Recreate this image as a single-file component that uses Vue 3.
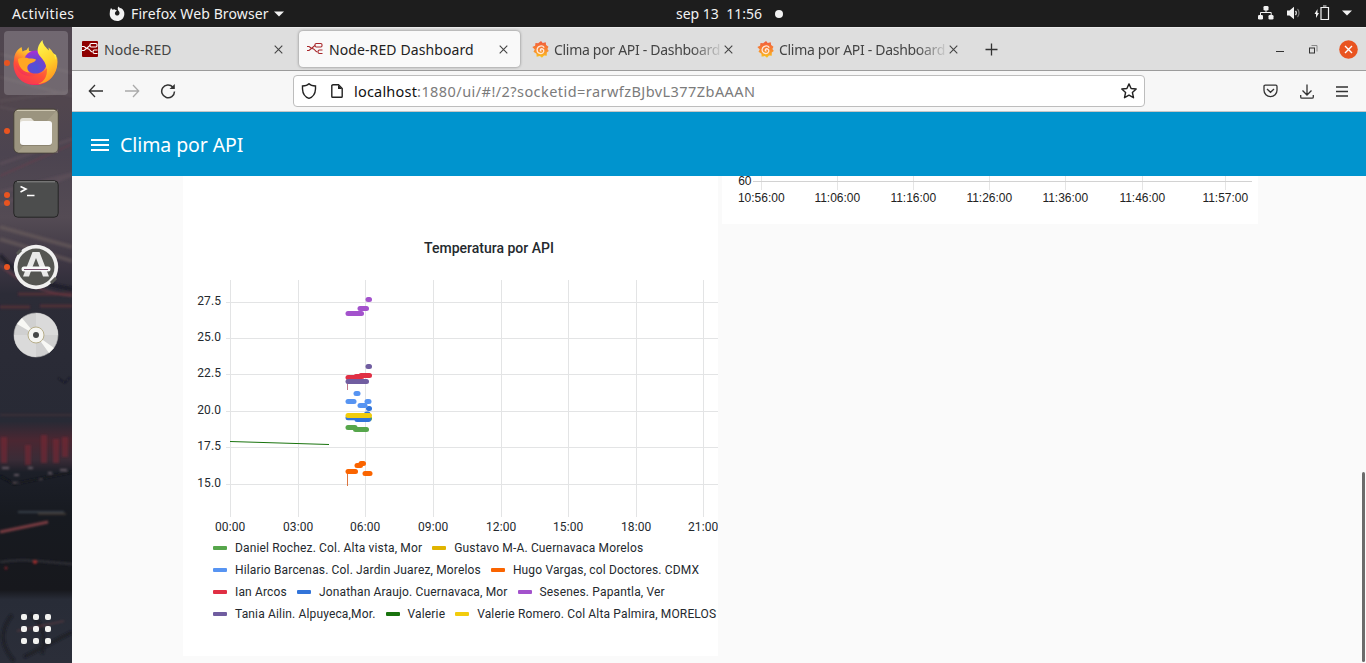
<script setup>
const tabs = [
  { title: 'Node-RED', icon: 'node' },
  { title: 'Node-RED Dashboard', icon: 'dash', active: true },
  { title: 'Clima por API - Dashboard', icon: 'grafana' },
  { title: 'Clima por API - Dashboard', icon: 'grafana' }
]

const legend = [
  [
    { name: 'Daniel Rochez. Col. Alta vista, Mor', color: '#56a64b' },
    { name: 'Gustavo M-A. Cuernavaca Morelos', color: '#e0b400' }
  ],
  [
    { name: 'Hilario Barcenas. Col. Jardin Juarez, Morelos', color: '#5794f2' },
    { name: 'Hugo Vargas, col Doctores. CDMX', color: '#fa6400' }
  ],
  [
    { name: 'Ian Arcos', color: '#e02f44' },
    { name: 'Jonathan Araujo. Cuernavaca, Mor', color: '#3274d9' },
    { name: 'Sesenes. Papantla, Ver', color: '#a352cc' }
  ],
  [
    { name: 'Tania Ailin. Alpuyeca,Mor.', color: '#705da0' },
    { name: 'Valerie', color: '#19730e' },
    { name: 'Valerie Romero. Col Alta Palmira, MORELOS', color: '#f2cc0c' }
  ]
]

const hours = [
  [47.5, '00:00'], [115.5, '03:00'], [182.5, '06:00'], [250.5, '09:00'],
  [318.5, '12:00'], [385.5, '15:00'], [453.5, '18:00'], [520.5, '21:00']
]
const degrees = [
  [26.5, '27.5'], [62.5, '25.0'], [98.5, '22.5'], [135.5, '20.0'], [171.5, '17.5'], [208.5, '15.0']
]

// x1, x2, y, colour of every run of samples
const runs = [
  [165, 172, 151.5, '#56a64b'], [172.500, 183.5, 153.5, '#56a64b'], [184, 186.5, 142.4, '#56a64b'],
  [165, 173, 141.8, '#3274d9'], [174, 185.5, 143.5, '#3274d9'], [183.5, 185, 138, '#3274d9'],
  [185.5, 186.5, 132.5, '#3274d9'],
  [165, 171, 125.5, '#5794f2'], [173, 175, 117.5, '#5794f2'],
  [177, 182, 129.5, '#5794f2'], [184, 186, 125.5, '#5794f2'],
  [165, 172.5, 195.5, '#fa6400'], [174, 177.5, 189.5, '#fa6400'],
  [178, 180.5, 187.5, '#fa6400'], [182, 187, 197.5, '#fa6400'],
  [165, 174, 101.5, '#e02f44'], [173, 179, 100.5, '#e02f44'], [178, 186.500, 99.5, '#e02f44'],
  [165, 183.5, 105.5, '#705da0'], [185, 186.5, 90.5, '#705da0'],
  [165, 178.5, 37.5, '#a352cc'], [177, 183.5, 32.5, '#a352cc'], [185, 186.5, 23.5, '#a352cc'],
  [165, 186.5, 139.5, '#f2cc0c']
]

const times = [
  [39, '10:56:00'], [115, '11:06:00'], [191, '11:16:00'], [267, '11:26:00'],
  [343, '11:36:00'], [420, '11:46:00'], [503, '11:57:00']
]
</script>

<template>
  <div class="desktop">
    <header class="topbar">
      <span class="activities">Activities</span>
      <svg class="fx-mono" width="16" height="16" viewBox="0 0 16 16">
        <path fill="#f2f2f2" d="M1 4.500 2 2l1.600 1.700C4.800 3 6 3 6.600 4L8 4.600 6.300 6c-1 1.500 0 3.500 1.700 3.500 2.200 0 3.300-2.300 1.900-4.300L9 4.300 8.700 2l.9-1.500L11 2.300l.8-.3C14.600 3.600 15.700 6 15.300 8.700 14.800 12.500 12 15 8.200 15 4 15 .7 12 .7 8z" />
      </svg>
      <span class="app-name">Firefox Web Browser</span>
      <svg class="caret" width="10" height="6" viewBox="0 0 10 6"><path fill="#f2f2f2" d="M0 .5h10l-5 5z" /></svg>
      <span class="clock">sep 13&nbsp; 11:56</span>
      <i class="notice"></i>
      <div class="status">
        <svg width="16" height="14" viewBox="0 0 16 14">
          <g fill="#f2f2f2"><rect x="5.500" y="0" width="5" height="4.500" rx="1.300" /><rect x="0" y="9" width="5" height="4.500" rx="1.300" /><rect x="10.500" y="9" width="5" height="4.500" rx="1.300" /></g>
          <path d="M8 4v3M2.500 9V6.500h10.700V9" fill="none" stroke="#f2f2f2" />
        </svg>
        <svg width="16" height="14" viewBox="0 0 16 14">
          <path fill="#f2f2f2" d="M1 4.500h2.500L8 .8v12.400L3.500 9.500H1z" />
          <path d="M9.500 5c1 1 1 3 0 4" fill="none" stroke="#f2f2f2" stroke-width="1.300" />
          <path d="M11.500 3c2 2 2 6 0 8" fill="none" stroke="#777" stroke-width="1.200" />
        </svg>
        <svg width="16" height="16" viewBox="0 0 16 16">
          <path fill="#f2f2f2" d="m3.500 4-3 5H2v4l3-5H3.500z" />
          <path d="M7 2.500h7.500v12H7zM9 1h3.500" fill="none" stroke="#f2f2f2" stroke-width="1.200" />
        </svg>
        <svg width="10" height="6" viewBox="0 0 10 6"><path fill="#f2f2f2" d="M0 .5h10l-5 5z" /></svg>
      </div>
    </header>

    <div class="workspace">
      <nav class="dock">
        <svg class="wallpaper" width="72" height="636" viewBox="0 0 72 636">
          <defs>
            <linearGradient id="sky" x1="0" y1="0" x2="0" y2="1">
              <stop offset="0" stop-color="#504650" /><stop offset=".12" stop-color="#51464e" />
              <stop offset=".2" stop-color="#4c4450" /><stop offset=".3" stop-color="#544b54" />
              <stop offset=".38" stop-color="#3a3441" /><stop offset=".42" stop-color="#2c2c37" />
              <stop offset=".62" stop-color="#282a35" /><stop offset=".65" stop-color="#4b2732" />
              <stop offset=".68" stop-color="#3a2c37" /><stop offset=".7" stop-color="#1c1f28" />
              <stop offset=".77" stop-color="#171a20" /><stop offset=".885" stop-color="#17181d" />
              <stop offset=".9" stop-color="#282c37" /><stop offset="1" stop-color="#2b2e39" />
            </linearGradient>
            <filter id="soft" x="0" y="0" width="72" height="636" filterUnits="userSpaceOnUse"><feGaussianBlur stdDeviation="1" /></filter>
          </defs>
          <rect width="72" height="636" fill="url(#sky)" />
          <g fill="none" filter="url(#soft)">
            <path d="M0 27 72 46M0 50l72 19M0 74l72-10M0 80l40 8" stroke="#6a5d62" stroke-width="2" opacity=".4" />
            <path d="M0 137 72 112M0 165l72-18M0 178l72-30" stroke="#6d5963" stroke-width="3" opacity=".35" />
            <path d="M0 149 72 117" stroke="#7b3c4a" opacity=".7" />
            <path d="M0 200l72 20M0 212l72 22" stroke="#71615f" stroke-width="4" opacity=".5" />
            <path d="M0 228c20 25 50 30 72 34" stroke="#1b1c27" stroke-width="4" opacity=".8" />
            <path d="M0 238c20 18 44 28 72 31" stroke="#6d3d48" stroke-width="2" opacity=".8" />
            <path d="M18 267h54M0 280h30M40 279h32" stroke="#6b3038" stroke-width="3" opacity=".6" />
            <path d="M0 388h72" stroke="#653741" opacity=".6" />
            <path d="M58 351l7 5 5-6" stroke="#14151d" />
            <path d="M4 436v-26M28 438v-20M44 436v-28M56 436v-24M65 430v-20" stroke="#7b2534" stroke-width="6" opacity=".6" />
            <path d="M2 441h7M14 448h5M28 441h5M38 452h4M48 446h4M60 443h7M12 456h8" stroke="#9c8690" stroke-width="2" opacity=".55" />
            <path d="M0 449l14 8 58-12" stroke="#14151c" stroke-width="1.500" />
            <path d="M0 505 48 495" stroke="#9b474c" stroke-width="3" opacity=".75" />
            <path d="M18 485h46" stroke="#59656e" /><path d="M38 487h28" stroke="#8d7254" opacity=".6" />
            <path d="M0 535c24-4 48 0 72 2" stroke="#303139" stroke-width="2" />
            <path d="M12 588c-12 14-12 30 2 46M30 587c12 8 16 22 12 40M24 630l48-25" stroke="#181b23" stroke-width="3.500" opacity=".75" />
            <path d="M17 604 64 594" stroke="#824449" opacity=".7" />
            <circle cx="35" cy="535" r="2" fill="#a02f2e" /><circle cx="6" cy="541" r="1.500" fill="#7b2428" />
          </g>
        </svg>

        <div class="dock-item current">
          <i class="run"></i>
          <svg width="48" height="48" viewBox="0 0 48 48">
            <defs>
              <linearGradient id="fox" x1=".8" y1=".1" x2=".25" y2=".95">
                <stop offset="0" stop-color="#fff044" /><stop offset=".35" stop-color="#ffb52b" />
                <stop offset=".65" stop-color="#ff5436" /><stop offset="1" stop-color="#e8127a" />
              </linearGradient>
              <linearGradient id="flame" x1=".4" y1="0" x2=".7" y2="1">
                <stop offset="0" stop-color="#fff34d" /><stop offset=".5" stop-color="#ffd028" /><stop offset="1" stop-color="#ff8a20" />
              </linearGradient>
              <radialGradient id="globe" cx=".5" cy=".75" r=".75">
                <stop offset="0" stop-color="#4a55d8" /><stop offset=".5" stop-color="#6b45d0" /><stop offset="1" stop-color="#a72fd6" />
              </radialGradient>
            </defs>
            <path fill="url(#fox)" d="M2.500 17C3.500 13 6 10 9.500 8l1 4.500c1.500-1 2.500-1.300 4-1.600l2-3 .5 4.100L28 13 31 8l13 8c4.200 12-4 30-20 30C11 46 1 37 1.500 24z" />
            <circle cx="23.500" cy="23" r="11.500" fill="url(#globe)" />
            <path fill="url(#flame)" d="M30.500 1c.2 5 3.500 7 6.500 11l-.5-3.500C41 12 43 17 43 21l2-3c2.500 13-5 26-19 27 7-3 9-8 8.500-15-.5-8-5-10-8-15-2-4-.5-9 4-14z" />
            <path fill="#ffa724" d="M6 20c4-2 8-2 11-.5 2-.3 5 0 7 1-1 3-4 3-6 4-4 2-3 7 0 9-7 0-12-6-12-13.500z" />
            <path fill="#ff5038" d="M2.500 19C2 35 17 40 25 36c5-2 8-4 10-7 1 12-7 16.500-14 16.500C8 45.500-.5 34 2.500 19z" opacity=".6" />
          </svg>
        </div>

        <div class="dock-item">
          <i class="run"></i>
          <svg width="48" height="48" viewBox="0 0 48 48">
            <rect x="1.800" y="2" width="44.400" height="44" rx="5" fill="#9b947f" stroke="#484239" />
            <path d="M5 3.500h38" stroke="#cfc8b2" /><path fill="#c2baa4" opacity=".25" d="M46 2v44H5z" />
            <path fill="#e1ddd2" d="M8 20v-6c0-2 1-3 3-3h8l4 4h14c2 0 3 1 3 3v5H8z" />
            <rect x="8" y="16" width="32" height="23" rx="3" fill="#635d4e" opacity=".4" />
            <rect x="8" y="14" width="32" height="24" rx="3" fill="#fafafa" />
          </svg>
        </div>

        <div class="dock-item">
          <i class="run pair"></i><i class="run pair low"></i>
          <svg width="48" height="48" viewBox="0 0 48 48">
            <rect x="1.800" y="5.700" width="44.400" height="36.500" rx="4" fill="#4c4d4d" stroke="#252525" />
            <path d="M5 6.800h38" stroke="#8a8a8a" />
            <path d="M8.500 11.500 14 14l-5.500 3M15 20.500h7.500" fill="none" stroke="#fff" stroke-width="1.600" />
          </svg>
        </div>

        <div class="dock-item">
          <i class="run"></i>
          <svg width="48" height="48" viewBox="0 0 48 48">
            <circle cx="24" cy="24" r="22.200" fill="#f0f0ef" /><circle cx="24" cy="24" r="18.500" fill="#555652" />
            <path d="m5 11 4-4M39 40l5-5" stroke="#555652" stroke-width="3" />
            <path fill="#e9e9e8" fill-rule="evenodd" d="M20.500 9h7L37 33.500h-6L29 28H19l-2 5.500h-6zM24 15l-3.500 9h7z" />
            <rect x="9.500" y="23.500" width="29" height="5" rx="2.500" fill="#fafafa" /><path d="M12 26.500h24" stroke="#77506e" />
          </svg>
        </div>

        <div class="dock-item">
          <svg width="48" height="48" viewBox="0 0 48 48">
            <circle cx="24" cy="24" r="22" fill="#d0d0d0" stroke="#b6b6b6" stroke-width=".6" />
            <path fill="#dadada" d="M24 24 24 2A22 22 0 0 1 46 24zM24 24v22A22 22 0 0 1 2 24z" />
            <path fill="#f8f8f5" d="M24 24 5 13l5-6zM24 24l18 13-5 5z" />
            <circle cx="24" cy="24" r="8" fill="#f5f5f2" stroke="#b7ae8a" /><circle cx="24" cy="24" r="3" fill="#454747" />
          </svg>
        </div>

        <div class="apps"><i v-for="n in 9" :key="n"></i></div>
      </nav>

      <main class="browser">
        <div class="tabbar">
          <div v-for="(tab, i) in tabs" :key="i" class="tab" :class="{ active: tab.active }">
            <svg v-if="tab.icon !== 'grafana'" width="16" height="16" viewBox="0 0 16 16">
              <rect v-if="tab.icon === 'node'" width="16" height="16" rx="1" fill="#8f0000" />
              <g fill="none" :stroke="tab.icon === 'node' ? '#fff' : '#a8282c'" stroke-width="1.100">
                <rect x="8" y="2.500" width="7" height="3.500" rx="1.200" /><path d="M0 5.500h2l2.200 1.500M0 9.500h2l3-2.500 3-2.700M4.500 7.500c4-.5 3 3.500 6 3.500" />
                <path d="M15.500 9h-3c-2 0-2 3.500 0 3.500h3" />
              </g>
            </svg>
            <svg v-else width="17" height="17" viewBox="0 0 16 16">
              <defs><linearGradient :id="'g' + i" x1="0" y1="0" x2="0" y2="1"><stop offset="0" stop-color="#f05a3c" /><stop offset=".5" stop-color="#f88431" /><stop offset="1" stop-color="#fbc51d" /></linearGradient></defs>
              <path :fill="'url(#g' + i + ')'" d="m8.500 0 1.600 1.800 2.800-.6.400 2.600 2.200 1.500-1 2.200 1.300 2-1.900 1.400v3l-2.600-.3-1.900 2.200-2-1.800-3 .8-.2-2.800L1.400 10l1.200-2L.3 5.600l2.600-1.200.4-2.500 2.500.3z" />
              <path d="M11.500 6.200C10 3.700 5.300 4.200 4.800 8c-.3 4 5.200 5 6.200 2 .7-2.200-1.900-3.500-3-2-.6 1 .3 1.600 1 1.200" fill="none" stroke="#ffe9dc" stroke-width="1.200" />
            </svg>
            <span class="tab-title" :class="{ faded: i > 1 }">{{ tab.title }}</span>
            <svg class="close" width="9" height="9" viewBox="0 0 9 9"><path d="m.7.7 7.600 7.600m0-7.600L.7 8.300" stroke="#444" stroke-width="1.100" /></svg>
          </div>
          <svg class="plus" width="13" height="13" viewBox="0 0 13 13"><path d="M6.500.5v12M.5 6.500h12" stroke="#333" stroke-width="1.300" /></svg>
          <div class="window-buttons">
            <svg width="8" height="8" viewBox="0 0 8 8"><path d="M0 6.500h8" stroke="#333" /></svg>
            <svg width="9" height="9" viewBox="0 0 9 9"><rect x=".5" y="3" width="5" height="5" fill="none" stroke="#333" /><path d="M2.500 .5H8v6" fill="none" stroke="#888" /></svg>
            <svg width="19" height="19" viewBox="0 0 19 19"><circle cx="9.500" cy="9.500" r="9.300" fill="#e95420" /><path d="m6 6 7 7m0-7-7 7" stroke="#fff" stroke-width="1.400" /></svg>
          </div>
        </div>

        <div class="toolbar">
          <div class="nav-buttons">
            <svg width="16" height="14" viewBox="0 0 16 14"><path d="M15 7H1.500M7 1 1.300 7 7 13" fill="none" stroke="#333" stroke-width="1.300" /></svg>
            <svg width="16" height="14" viewBox="0 0 16 14"><path d="M1 7h13.500M9 1l5.700 6L9 13" fill="none" stroke="#aaa" stroke-width="1.300" /></svg>
            <svg width="16" height="16" viewBox="0 0 16 16"><path d="M12.800 4A6.400 6.400 0 1 0 14.500 8.500" fill="none" stroke="#333" stroke-width="1.500" /><path fill="#333" d="M14.800 1v5H9.500z" /></svg>
          </div>
          <div class="urlbar">
            <svg width="16" height="16" viewBox="0 0 16 16"><path d="M8 .8C9.500 2.500 12 3 14.500 3v3C14.300 10.500 12 14 8 15.300 4 14 1.700 10.500 1.500 6V3C4 3 6.500 2.500 8 .8z" fill="none" stroke="#222" stroke-width="1.400" /></svg>
            <svg width="12" height="14" viewBox="0 0 12 14"><path d="M2 .8h5.500l3.700 3.700v8c0 .5-.3.800-.8.800H1.600c-.5 0-.8-.3-.8-.8v-11z" fill="none" stroke="#222" stroke-width="1.400" /><path fill="#222" d="M7 1v4h4z" /></svg>
            <span class="url"><b>localhost</b>:1880/ui/#!/2?socketid=rarwfzBJbvL377ZbAAAN</span>
            <svg class="star" width="16" height="16" viewBox="0 0 16 16"><path d="m8 .9 2.100 4.600 5.100.5-3.800 3.500 1.100 5.200L8 12.200l-4.500 2.500 1.100-5.200L.8 6l5.100-.5z" fill="none" stroke="#222" stroke-width="1.400" stroke-linejoin="round" /></svg>
          </div>
          <div class="tools">
            <svg width="15" height="14" viewBox="0 0 15 14"><path d="M2.200 1.200h10.600c.8 0 1.200.4 1.200 1.200v3.800a6.500 6.500 0 0 1-13 0V2.400c0-.8.400-1.200 1.200-1.200zM4 5l3.500 3.300L11 5" fill="none" stroke="#333" stroke-width="1.300" /></svg>
            <svg width="14" height="15" viewBox="0 0 14 15"><path d="M7 .5v10M2.500 6.500 7 11l4.500-4.500M.7 11v2c0 .8.500 1.200 1.300 1.200h10c.8 0 1.300-.4 1.300-1.200v-2" fill="none" stroke="#333" stroke-width="1.300" /></svg>
            <svg width="12" height="11" viewBox="0 0 12 11"><path d="M0 1h12M0 5.500h12M0 10h12" stroke="#333" stroke-width="1.300" /></svg>
          </div>
        </div>

        <header class="dash-head">
          <span class="burger"></span>
          <h1>Clima por API</h1>
        </header>

        <div class="dash">
          <section class="card main-card">
            <h2>Temperatura por API</h2>
            <svg class="chart" width="535" height="262" viewBox="0 0 535 262">
              <g stroke="#e3e4e5">
                <path v-for="h in hours" :key="h[1]" :d="`M${h[0]} 4V241`" />
                <path v-for="d in degrees" :key="d[1]" :d="`M43 ${d[0]}H535`" />
              </g>
              <path d="M47 165.500 146 168.500" stroke="#19730e" fill="none" />
              <path d="M164.500 105v9" stroke="#b0566a" stroke-width=".8" /><path d="M164.500 197v13" stroke="#d9672a" stroke-width=".9" />
              <g stroke-width="5" stroke-linecap="round">
                <path v-for="(r, i) in runs" :key="i" :d="`M${r[0]} ${r[2]}H${r[1]}`" :stroke="r[3]" />
              </g>
              <g class="axis">
                <text v-for="d in degrees" :key="d[1]" x="38" :y="d[0] + 2.500" text-anchor="end">{{ d[1] }}</text>
                <text v-for="h in hours" :key="h[1]" :x="h[0] - .3" y="255" text-anchor="middle">{{ h[1] }}</text>
              </g>
            </svg>
            <div class="legend">
              <div v-for="(row, i) in legend" :key="i" class="legend-row">
                <span v-for="s in row" :key="s.name" class="series"><i :style="{ background: s.color }"></i>{{ s.name }}</span>
              </div>
            </div>
          </section>

          <section class="card side-card">
            <svg width="536" height="48" viewBox="0 0 536 48">
              <g stroke="#e5e5e5"><path v-for="t in times" :key="t[1]" :d="`M${t[0] + .5} 0V14`" /></g>
              <path d="M31 5.500H530" stroke="#d2d2d2" />
              <g class="times">
                <text x="29.500" y="8.500" text-anchor="end">60</text>
                <text v-for="t in times" :key="t[1]" :x="t[0] + .3" y="25.500" text-anchor="middle">{{ t[1] }}</text>
              </g>
            </svg>
          </section>
          <i class="scrollbar"></i>
        </div>
      </main>
    </div>
  </div>
</template>

<style>
body { margin: 0; overflow: hidden; }
</style>

<style scoped>
* { box-sizing: border-box; }
svg { display: block; flex: none; }
.desktop { width: 1366px; height: 663px; display: flex; flex-direction: column; overflow: hidden; font: 14px "Noto Sans", sans-serif; white-space: nowrap; }
.topbar { height: 27px; background: #1d1d1d; color: #f2f2f2; display: flex; align-items: center; padding: 0 15px 0 12px; flex: none; }
.activities { width: 97px; letter-spacing: .4px; }
.app-name { width: 138px; margin-left: 6px; letter-spacing: .12px; }
.caret { margin-left: 5px; }
.clock { margin-left: 392px; width: 87px; }
.notice { width: 8px; height: 8px; border-radius: 50%; background: #f2f2f2; margin-left: 12px; }
.status { margin-left: auto; display: flex; align-items: center; gap: 12px; position: relative; left: 1px; top: -1px; }
.workspace { display: flex; flex: 1; min-height: 0; }
.dock { width: 72px; position: relative; display: flex; flex-direction: column; align-items: center; gap: 4px; padding: 4px 0; flex: none; overflow: hidden; }
.wallpaper { position: absolute; left: 0; top: 0; }
.dock-item { width: 64px; height: 64px; border-radius: 4px; position: relative; display: flex; align-items: center; justify-content: center; flex: none; }
.current { background: rgba(255, 255, 255, .19); }
.run { position: absolute; left: 0; top: 29px; width: 6px; height: 6px; border-radius: 50%; background: #e95420; }
.run.pair { top: 25px; }
.run.low { top: 33px; }
.apps { margin-top: auto; margin-bottom: 15px; display: grid; grid-template-columns: repeat(3, 6px); gap: 6px; position: relative; }
.apps i { height: 6px; border-radius: 2px; background: #f2f2f0; }
.browser { flex: 1; min-width: 0; display: flex; flex-direction: column; }
.tabbar { height: 44px; background: #dedede; border-top: 1px solid #ebebeb; border-bottom: 1px solid #9c9c9c; display: flex; align-items: center; padding-left: 2px; flex: none; color: #444; }
.tab { width: 221px; height: 36px; margin-right: 4px; padding: 0 12px 0 8px; display: flex; align-items: center; border-radius: 4px; }
.tab.active { background: #f9f9f9; box-shadow: 0 0 3px rgba(0, 0, 0, .45); color: #222; }
.tab-title { margin-left: 6px; width: 167px; overflow: hidden; letter-spacing: .1px; }
.faded { margin-left: 5px; letter-spacing: -.3px; -webkit-mask-image: linear-gradient(90deg, #000 82%, transparent 102%); mask-image: linear-gradient(90deg, #000 82%, transparent 102%); }
.close { margin-left: auto; }
.plus { margin-left: 11px; }
.window-buttons { margin-left: auto; margin-right: 8px; display: flex; align-items: center; gap: 25px; }
.window-buttons svg:last-child { margin-left: -4px; }
.toolbar { height: 41px; background: #f7f7f7; border-bottom: 1px solid #c6c6c6; display: flex; align-items: center; padding: 0 18px 0 16px; flex: none; }
.nav-buttons { display: flex; gap: 20px; width: 205px; align-items: center; }
.urlbar { width: 852px; height: 32px; border: 1px solid #bdbdbd; border-radius: 4px; background: #fff; display: flex; align-items: center; padding: 0 7px; }
.urlbar svg + svg { margin-left: 14px; }
.url { margin-left: 11px; color: #7b7b7b; font-size: 14.500px; letter-spacing: .44px; }
.url b { font-weight: 400; color: #111; letter-spacing: .2px; }
.urlbar .star { margin-left: auto; }
.tools { display: flex; align-items: center; margin-left: auto; gap: 22px; }
.dash-head { height: 64px; background: #0094ce; display: flex; align-items: center; padding-left: 19px; color: #fff; flex: none; }
.burger { width: 18px; height: 12px; border-top: 2px solid #fff; border-bottom: 2px solid #fff; background: linear-gradient(#fff, #fff) center / 100% 2px no-repeat; position: relative; top: 1px; }
h1 { margin: 0 0 0 11px; font-size: 19.500px; font-weight: 400; letter-spacing: -.08px; }
.dash { flex: 1; min-height: 0; background: #fafafa; display: flex; align-items: flex-start; padding-left: 111px; gap: 4px; position: relative; }
.card { background: #fff; }
.main-card { width: 535px; height: 480px; overflow: hidden; padding-top: 62px; font-family: Roboto, sans-serif; color: #24292e; }
h2 { margin: 0; height: 38px; padding-left: 77px; text-align: center; font-size: 14px; line-height: 20px; font-weight: 500; }
.axis { font: 12px Roboto, sans-serif; fill: #24292e; letter-spacing: .1px; }
.legend-row { height: 22px; display: flex; align-items: center; gap: 10px; padding-left: 30px; font-size: 12px; letter-spacing: .155px; }
.legend { margin-top: -1px; }
.series { display: flex; align-items: center; }
.series i { width: 14px; height: 4px; border-radius: 1px; margin-right: 8px; }
.side-card { width: 536px; height: 48px; }
.times { font: 12px "Liberation Sans", Arial, sans-serif; fill: #222; }
.scrollbar { position: absolute; right: 1px; top: 296px; width: 3px; height: 190px; border-radius: 2px; background: #6b6b6b; }
</style>
